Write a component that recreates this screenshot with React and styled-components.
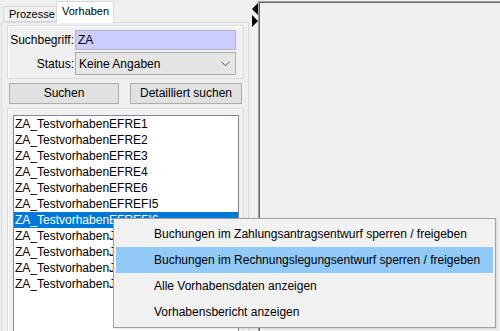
import React from "react";
import styled, { createGlobalStyle } from "styled-components";

const Global = createGlobalStyle`
  html, body { margin: 0; padding: 0; background: #f0f0f0; }
  body { font-family: "Liberation Sans", Arial, sans-serif; font-size: 12px; color: #000; }
  #root { width: 500px; height: 331px; overflow: hidden; }
`;

const Page = styled.div`
  position: relative;
  display: flex;
  width: 500px;
  height: 331px;
  background: #f0f0f0;
  overflow: hidden;
`;

const LeftPane = styled.div`
  width: 248px;
  margin-left: 1px;
  padding-top: 2px;
  display: flex;
  flex-direction: column;
`;

const TabStrip = styled.div`
  display: flex;
  align-items: flex-end;
  height: 20px;
  padding-left: 2px;
  position: relative;
  z-index: 1;
`;

const Tab = styled.div`
  box-sizing: border-box;
  flex: none;
  width: ${(p) => p.$w}px;
  height: ${(p) => (p.$active ? "22px" : "16px")};
  margin-bottom: ${(p) => (p.$active ? "-1px" : "0")};
  padding: ${(p) => (p.$active ? "3px 0 0 5px" : "1px 0 0 5px")};
  background: ${(p) => (p.$active ? "#ffffff" : "#f0f0f0")};
  border: 1px solid #d9d9d9;
  border-bottom: ${(p) => (p.$active ? "none" : "1px solid #d9d9d9")};
  border-right: ${(p) => (p.$active ? "1px solid #d9d9d9" : "none")};
  font-size: 11px;
  line-height: 13px;
  white-space: nowrap;
  overflow: hidden;
`;

const TabPage = styled.div`
  flex: 1;
  box-sizing: border-box;
  border: 1px solid #d9d9d9;
  border-bottom: none;
  padding: 2px 4px 0 5px;
  display: flex;
  flex-direction: column;
  background: #f0f0f0;
`;

const GroupBox = styled.div`
  box-sizing: border-box;
  border: 1px solid #dcdcdc;
  box-shadow: inset 1px 1px 0 #ffffff;
  width: 237px;
  height: ${(p) => (p.$h ? `${p.$h}px` : "auto")};
  flex: ${(p) => (p.$grow ? 1 : "none")};
  padding: ${(p) => p.$pad};
`;

const FieldGrid = styled.div`
  display: grid;
  grid-template-columns: 66px 161px;
  column-gap: 1px;
  row-gap: 2px;
  align-items: center;
`;

const Label = styled.div`
  text-align: right;
  white-space: nowrap;
`;

const TextInput = styled.div`
  box-sizing: border-box;
  height: 20px;
  border: 1px solid #b4b4c8;
  background: #ccccff;
  padding-left: 2px;
  line-height: 18px;
`;

const Combo = styled.div`
  box-sizing: border-box;
  height: 23px;
  border: 1px solid #adadad;
  background: #e5e5e5;
  padding: 0 0 0 3px;
  display: flex;
  align-items: center;
  justify-content: space-between;
  line-height: 20px;
`;

const Chevron = styled.svg`
  width: 9px;
  height: 6px;
  margin-right: 5px;
`;

const ButtonRow = styled.div`
  display: flex;
  gap: 11px;
  padding: 4px 0 0 2px;
  height: 21px;
  margin-bottom: 4px;
`;

const Button = styled.div`
  box-sizing: border-box;
  width: ${(p) => p.$w}px;
  height: 21px;
  border: 1px solid #adadad;
  background: #e1e1e1;
  text-align: center;
  line-height: 19px;
`;

const ListBox = styled.div`
  box-sizing: border-box;
  width: 226px;
  height: 240px;
  border: 1px solid #828790;
  border-bottom: none;
  background: #ffffff;
`;

const ListItem = styled.div`
  height: 16px;
  line-height: 16px;
  padding-left: 1px;
  white-space: nowrap;
  overflow: hidden;
  background: ${(p) => (p.$sel ? "#0078d7" : "transparent")};
  color: ${(p) => (p.$sel ? "#ffffff" : "#000000")};
`;

const Splitter = styled.div`
  width: 9px;
  display: flex;
  flex-direction: column;
  padding: 3px 0 0 3px;
  box-sizing: border-box;
`;

const Arrow = styled.svg`
  width: 6px;
  height: 12px;
  display: block;
`;

const RightPane = styled.div`
  flex: 1;
  margin-top: 1px;
  border-top: 1px solid #a0a0a0;
  border-left: 1px solid #a0a0a0;
  box-shadow: inset 1px 1px 0 #696969;
  background: #f0f0f0;
`;

const Menu = styled.div`
  position: absolute;
  left: 113px;
  top: 218px;
  width: 383px;
  box-sizing: border-box;
  border: 1px solid #a0a0a0;
  background: #f2f2f2;
  padding: 2px;
  box-shadow: 1px 1px 1px rgba(0, 0, 0, 0.08);
`;

const MenuItem = styled.div`
  height: 26px;
  line-height: 26px;
  padding-left: 38px;
  white-space: nowrap;
  background: ${(p) => (p.$hl ? "#91c9f7" : "transparent")};
`;

const items = [
  "ZA_TestvorhabenEFRE1",
  "ZA_TestvorhabenEFRE2",
  "ZA_TestvorhabenEFRE3",
  "ZA_TestvorhabenEFRE4",
  "ZA_TestvorhabenEFRE6",
  "ZA_TestvorhabenEFREFI5",
  "ZA_TestvorhabenEFREFI6",
  "ZA_TestvorhabenJTF1",
  "ZA_TestvorhabenJTF2",
  "ZA_TestvorhabenJTF3",
  "ZA_TestvorhabenJTF4",
];

const menuItems = [
  "Buchungen im Zahlungsantragsentwurf sperren / freigeben",
  "Buchungen im Rechnungslegungsentwurf sperren / freigeben",
  "Alle Vorhabensdaten anzeigen",
  "Vorhabensbericht anzeigen",
];

export default function App() {
  return (
    <>
      <Global />
      <Page>
        <LeftPane>
          <TabStrip>
            <Tab $w={53}>Prozesse</Tab>
            <Tab $active $w={58}>Vorhaben</Tab>
          </TabStrip>
          <TabPage>
            <GroupBox $h={54} $pad="4px 0 0 0">
              <FieldGrid>
                <Label>Suchbegriff:</Label>
                <TextInput>ZA</TextInput>
                <Label>Status:</Label>
                <Combo>
                  <span>Keine Angaben</span>
                  <Chevron viewBox="0 0 9 6">
                    <path d="M0.5 0.8 L4.5 4.8 L8.5 0.8" fill="none" stroke="#505050" strokeWidth="1" />
                  </Chevron>
                </Combo>
              </FieldGrid>
            </GroupBox>
            <ButtonRow>
              <Button $w={110}>Suchen</Button>
              <Button $w={112}>Detailliert suchen</Button>
            </ButtonRow>
            <GroupBox $grow $pad="6px 0 0 5px">
              <ListBox>
                {items.map((t, i) => (
                  <ListItem key={t} $sel={i === 6}>
                    {t}
                  </ListItem>
                ))}
              </ListBox>
            </GroupBox>
          </TabPage>
        </LeftPane>
        <Splitter>
          <Arrow viewBox="0 0 6 12">
            <path d="M6 0 L0 6 L6 12 Z" fill="#000" />
          </Arrow>
          <Arrow viewBox="0 0 6 12">
            <path d="M0 0 L6 6 L0 12 Z" fill="#000" />
          </Arrow>
        </Splitter>
        <RightPane />
        <Menu>
          {menuItems.map((t, i) => (
            <MenuItem key={t} $hl={i === 1}>
              {t}
            </MenuItem>
          ))}
        </Menu>
      </Page>
    </>
  );
}
